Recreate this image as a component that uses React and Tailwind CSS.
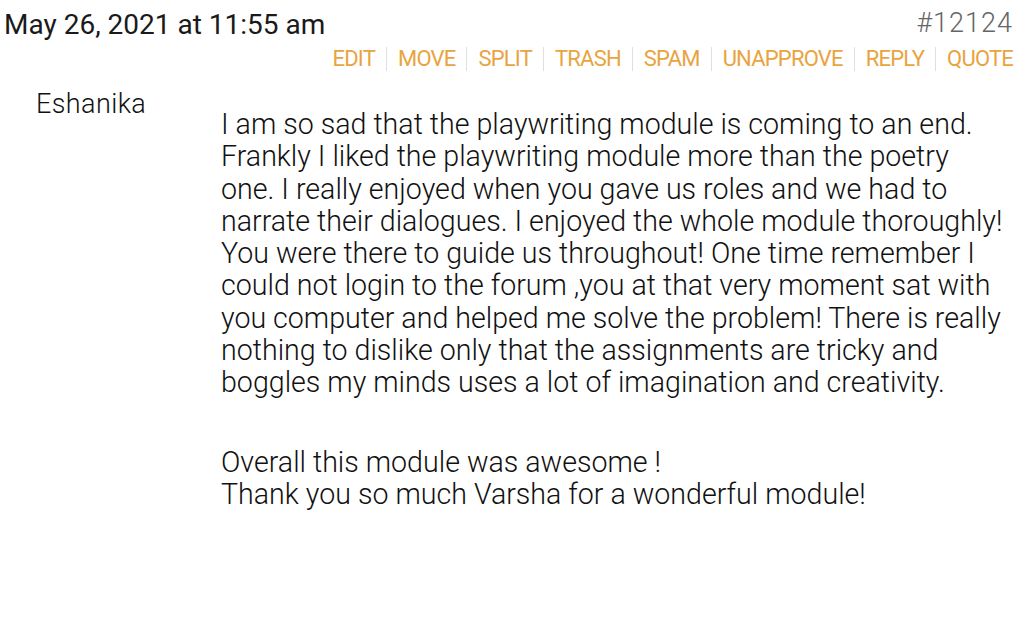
export default function App() {
  const actions = ["EDIT", "MOVE", "SPLIT", "TRASH", "SPAM", "UNAPPROVE", "REPLY", "QUOTE"];
  return (
    <div className="w-[1024px] h-[640px] bg-white overflow-hidden" style={{ fontFamily: "Roboto, 'Noto Sans', sans-serif" }}>
      <div className="flex justify-between items-start pl-[4px] pr-[11px]">
        <div className="pt-[8px] text-[28px] leading-[34px] text-[#1a1a1a]">May 26, 2021 at 11:55 am</div>
        <div className="pt-[6px] text-[27px] leading-[34px] text-[#666] font-light tracking-[1px]">#12124</div>
      </div>
      <div className="flex justify-end pr-[11px] mt-[4px]">
        {actions.map((a, i) => (
          <div key={a} className="flex items-center">
            {i > 0 && <span className="w-px h-[24px] bg-[#e0e0e0] mx-[11px]"></span>}
            <span className="text-[22px] leading-[26px] text-[#e9a43f] tracking-[-0.8px]">{a}</span>
          </div>
        ))}
      </div>
      <div className="flex mt-[16px]">
        <div className="w-[221px] pl-[36px] text-[27px] leading-[32px] font-light text-[#111] tracking-[0.4px]">Eshanika</div>
        <div className="w-[784px] pt-[20px] text-[28.6px] leading-[32.3px] font-light text-[#111]">
          <p>
            I am so sad that the playwriting module is coming to an end. Frankly I liked the playwriting module more than the poetry one. I really enjoyed when you gave us roles and we had to narrate their dialogues. I enjoyed the whole module thoroughly! You were there to guide us throughout! One time remember I could not login to the forum ,you at that very moment sat with you computer and helped me solve the problem! There is really nothing to dislike only that the assignments are tricky and boggles my minds uses a lot of imagination and creativity.
          </p>
          <p className="mt-[47px]">
            Overall this module was awesome !<br />
            Thank you so much Varsha for a wonderful module!
          </p>
        </div>
      </div>
    </div>
  );
}
